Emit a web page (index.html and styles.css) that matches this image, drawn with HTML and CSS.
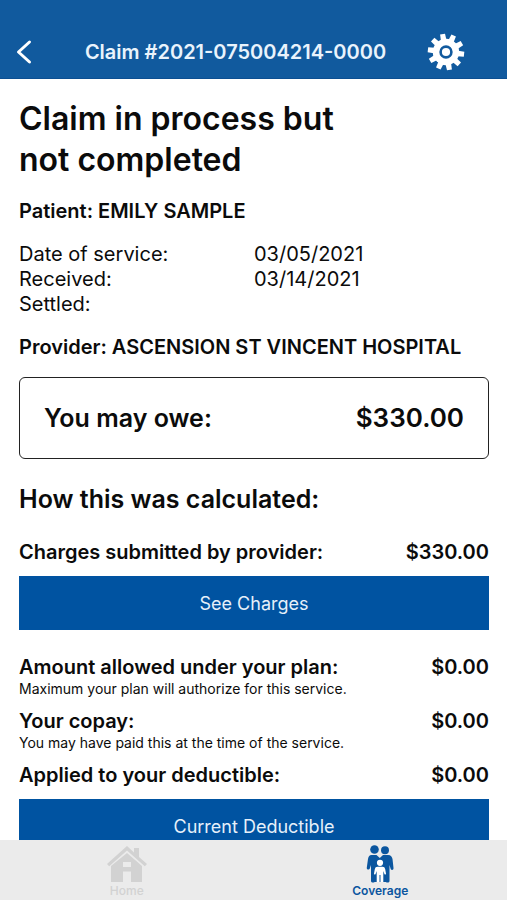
FILE: index.html
```html
<!DOCTYPE html>
<html lang="en">
<head>
  <meta charset="utf-8">
  <meta name="viewport" content="width=device-width, initial-scale=1">
  <title>Claim #2021-075004214-0000</title>
  <link rel="stylesheet" href="styles.css">
</head>
<body>
  <header class="topbar">
    <button class="icon-button" type="button" aria-label="Back">
      <svg width="16" height="26" viewBox="0 0 16 26" fill="none" stroke="currentColor" stroke-width="3" stroke-linecap="round" stroke-linejoin="round"><path d="M13.500 3 2.500 13l11 10"/></svg>
    </button>
    <p class="topbar-title">Claim #2021-075004214-0000</p>
    <button class="icon-button settings" type="button" aria-label="Settings">
      <svg width="38" height="38" viewBox="-19 -19 38 38">
        <g fill="currentColor">
          <circle r="13.200"/>
          <g id="teeth">
            <path id="tooth" d="M-2.800-12-2.500-18.200H2.500L2.800-12Z" transform="rotate(-11)"/>
            <use href="#tooth" transform="rotate(36)"/>
            <use href="#tooth" transform="rotate(72)"/>
            <use href="#tooth" transform="rotate(108)"/>
            <use href="#tooth" transform="rotate(144)"/>
          </g>
          <use href="#teeth" transform="rotate(180)"/>
        </g>
        <circle class="gear-ring" r="5.400" fill="none" stroke-width="2.600"/>
      </svg>
    </button>
  </header>

  <main class="content">
    <h1 class="title">Claim in process but<br>not completed</h1>
    <p class="strong patient">Patient: EMILY SAMPLE</p>
    <dl class="dates">
      <dt>Date of service:</dt><dd>03/05/2021</dd>
      <dt>Received:</dt><dd>03/14/2021</dd>
      <dt>Settled:</dt><dd></dd>
    </dl>
    <p class="strong provider">Provider: ASCENSION ST VINCENT HOSPITAL</p>

    <section class="owe">
      <span>You may owe:</span>
      <span class="owe-amount">$330.00</span>
    </section>

    <h2 class="subtitle">How this was calculated:</h2>

    <section class="item">
      <div class="row strong"><span>Charges submitted by provider:</span><span>$330.00</span></div>
      <button class="action" type="button">See Charges</button>
    </section>
    <section class="item">
      <div class="row strong"><span>Amount allowed under your plan:</span><span>$0.00</span></div>
      <p class="note">Maximum your plan will authorize for this service.</p>
    </section>
    <section class="item compact">
      <div class="row strong"><span>Your copay:</span><span>$0.00</span></div>
      <p class="note">You may have paid this at the time of the service.</p>
    </section>
    <section class="item compact">
      <div class="row strong"><span>Applied to your deductible:</span><span>$0.00</span></div>
      <button class="action" type="button">Current Deductible</button>
    </section>
  </main>

  <nav class="tabs" aria-label="Main">
    <a class="tab" href="#home">
      <svg width="40" height="38" viewBox="0 0 40 38" fill="currentColor">
        <path d="M20 1 27 7.500V3h5v9l8 7-2.200 2.200L20 5.600 2.200 21.200 0 19Z"/>
        <path d="M20 8 35 21v16H24V26.500h-8V37H4V21ZM16 17v5h8v-5Z" fill-rule="evenodd"/>
      </svg>
      <span>Home</span>
    </a>
    <a class="tab active" href="#coverage" aria-current="page">
      <svg width="28" height="38" viewBox="0 0 28 38" fill="currentColor">
        <circle cx="8.500" cy="4.500" r="4.300"/>
        <circle cx="19" cy="5.200" r="4"/>
        <path d="M5.500 10h5l3.300 3 3.200-3h5c3 0 4 2 4.500 4L27.500 23c.3 2-2 2.600-2.800 1L23.500 20v16c0 2-4 2-4 0V26H9v10c0 2-4 2-4 0V20l-1.200 3.500c-.8 2-3.600 1-3-1L2 14C2.500 11.500 3.500 10 5.500 10Z"/>
        <path d="M8 25h12v12H8Z"/>
        <g class="child">
          <circle cx="14" cy="17.800" r="3.100"/>
          <path d="M11.500 21.800h5c1.600 0 2.300.8 2.700 2.500l.8 4.200c.2 1.300-1.300 1.400-1.700.2L17.300 26v11h-2.800v-7h-1v7h-2.800V26l-1 2.700c-.4 1.200-1.900 1.100-1.700-.2l.8-4.200c.4-1.700 1.100-2.500 2.700-2.500Z"/>
        </g>
      </svg>
      <span>Coverage</span>
    </a>
  </nav>
</body>
</html>
```
FILE: styles.css
```css
* {
  box-sizing: border-box;
}

body {
  display: flex;
  flex-direction: column;
  height: 100vh;
  margin: 0;
  background: #fff;
  color: #0b0b0b;
  font: 20px/25px Inter, "Liberation Sans", sans-serif;
}

h1, h2, p, dl, dd {
  margin: 0;
}

button {
  border: 0;
  font: inherit;
  color: inherit;
}

.topbar {
  display: grid;
  grid-template-columns: 48px 1fr 84px;
  align-items: end;
  flex: none;
  padding: 33px 0 7px;
  background: #115a9e;
  border-bottom: 1px solid #0c4f92;
  color: #fff;
}

.icon-button {
  display: flex;
  align-items: center;
  justify-content: center;
  height: 38px;
  padding: 0;
  background: none;
}

.settings {
  justify-content: flex-start;
  padding-left: 4px;
}

.gear-ring {
  stroke: #115a9e;
}

.topbar-title {
  align-self: center;
  color: #e9f3fc;
  font-weight: 600;
  text-align: center;
}

.content {
  flex: 1;
  min-height: 0;
  padding: 19px 18px 24px 19px;
  overflow-y: auto;
  scrollbar-width: none;
}

.title {
  font-size: 32px;
  font-weight: 600;
  line-height: 41px;
}

.strong {
  font-weight: 600;
}

.patient {
  margin-top: 19px;
}

.dates {
  display: grid;
  grid-template-columns: 1fr 1fr;
  margin-top: 18px;
}

.provider {
  margin-top: 18px;
}

.owe {
  display: flex;
  align-items: center;
  justify-content: space-between;
  margin-top: 17px;
  padding: 24px;
  border: 1px solid #222;
  border-radius: 6px;
  font-size: 25px;
  font-weight: 600;
  line-height: 32px;
}

.owe-amount {
  font-size: 26px;
}

.subtitle {
  margin-top: 24px;
  font-size: 25px;
  font-weight: 600;
  line-height: 32px;
}

.item {
  margin-top: 25px;
}

.compact {
  margin-top: 12px;
}

.row {
  display: flex;
  justify-content: space-between;
}

.action {
  display: block;
  width: 100%;
  height: 54px;
  margin-top: 11px;
  background: #0053a1;
  color: #e6f0fa;
  font-size: 18px;
}

.note {
  font-size: 14px;
  line-height: 17px;
}

.tabs {
  display: grid;
  grid-template-columns: 1fr 1fr;
  flex: none;
  height: 60px;
  background: #ebebeb;
}

.tab {
  display: flex;
  flex-direction: column;
  align-items: center;
  padding-top: 5px;
  color: #d2d2d2;
  font-size: 12px;
  font-weight: 500;
  line-height: 16px;
  text-decoration: none;
}

.active {
  color: #0b569f;
  font-weight: 600;
}

.child {
  fill: #fff;
}
```
